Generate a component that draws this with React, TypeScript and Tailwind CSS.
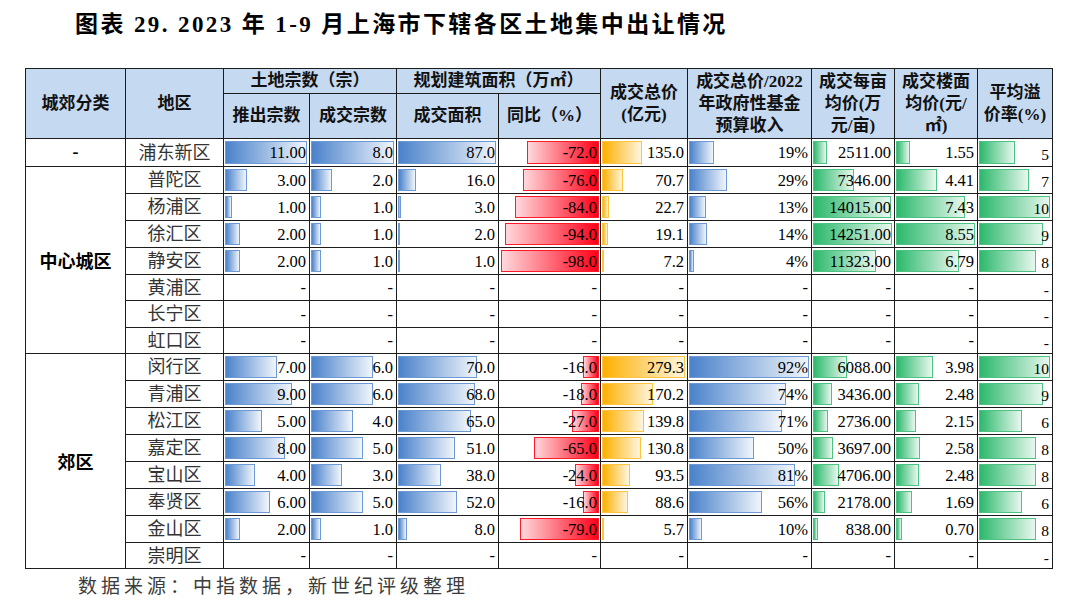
import React from "react";

type Row = {
  name: string;
  v: (number | null)[];
  h?: string;
};

const center: Row[] = [
  { name: "普陀区", v: [3, 2, 16, -76, 70.7, 29, 7346, 4.41, 7] },
  { name: "杨浦区", v: [1, 1, 3, -84, 22.7, 13, 14015, 7.43, 10] },
  { name: "徐汇区", v: [2, 1, 2, -94, 19.1, 14, 14251, 8.55, 9] },
  { name: "静安区", v: [2, 1, 1, -98, 7.2, 4, 11323, 6.79, 8] },
  { name: "黄浦区", v: [null, null, null, null, null, null, null, null, null], h: "h-[26px]" },
  { name: "长宁区", v: [null, null, null, null, null, null, null, null, null] },
  { name: "虹口区", v: [null, null, null, null, null, null, null, null, null], h: "h-[26px]" },
];

const suburb: Row[] = [
  { name: "闵行区", v: [7, 6, 70, -16, 279.3, 92, 6088, 3.98, 10] },
  { name: "青浦区", v: [9, 6, 68, -18, 170.2, 74, 3436, 2.48, 9] },
  { name: "松江区", v: [5, 4, 65, -27, 139.8, 71, 2736, 2.15, 6] },
  { name: "嘉定区", v: [8, 5, 51, -65, 130.8, 50, 3697, 2.58, 8] },
  { name: "宝山区", v: [4, 3, 38, -24, 93.5, 81, 4706, 2.48, 8] },
  { name: "奉贤区", v: [6, 5, 52, -16, 88.6, 56, 2178, 1.69, 6] },
  { name: "金山区", v: [2, 1, 8, -79, 5.7, 10, 838, 0.7, 8] },
  { name: "崇明区", v: [null, null, null, null, null, null, null, null, null], h: "h-[26px]" },
];

const pudong: Row = { name: "浦东新区", v: [11, 8, 87, -72, 135, 19, 2511, 1.55, 5], h: "h-[26px]" };

const bars = {
  blue: "left-[1px] border-[#6d9ad5] bg-[linear-gradient(to_right,#4a82cb,#f0f5fb)]",
  red: "right-[1px] border-[#ff1a2a] bg-[linear-gradient(to_left,#ff0018,#ffd8dc)]",
  orange: "left-[1px] border-[#ffc43f] bg-[linear-gradient(to_right,#ffb000,#fff5de)]",
  green: "left-[1px] border-[#4dc283] bg-[linear-gradient(to_right,#2cb96c,#e8f7ee)]",
};

// per column: colour, max for the bar, formatter
const cols: { bar: keyof typeof bars; max: number; fmt: (n: number) => string }[] = [
  { bar: "blue", max: 11, fmt: (n) => n.toFixed(2) },
  { bar: "blue", max: 8, fmt: (n) => n.toFixed(1) },
  { bar: "blue", max: 87, fmt: (n) => n.toFixed(1) },
  { bar: "red", max: 98, fmt: (n) => n.toFixed(1) },
  { bar: "orange", max: 279.3, fmt: (n) => n.toFixed(1) },
  { bar: "blue", max: 92, fmt: (n) => `${n}%` },
  { bar: "green", max: 14251, fmt: (n) => n.toFixed(2) },
  { bar: "green", max: 8.55, fmt: (n) => n.toFixed(2) },
  { bar: "green", max: 10, fmt: (n) => String(n) },
];

const cell = "border border-[#1c1c1c]";

function BarCell({ value, col }: { value: number | null; col: number }) {
  const c = cols[col];
  const last = col === 8;
  return (
    <td className={`${cell} relative p-0`}>
      {value !== null && (
        <div
          className={`absolute top-[2px] bottom-[2px] border ${bars[c.bar]}`}
          style={{ width: `calc((100% - 3px) * ${Math.abs(value) / c.max})` }}
        />
      )}
      <div
        className={`relative pr-[3px] text-right text-black leading-[19px] ${
          last ? "pt-[3px] text-[15.5px]" : "text-[16.5px]"
        }`}
      >
        {value === null ? "-" : c.fmt(value)}
      </div>
    </td>
  );
}

function DataRow({ row, first }: { row: Row; first?: React.ReactNode }) {
  return (
    <tr className={row.h ?? "h-[27px]"}>
      {first}
      <td className={`${cell} text-center text-[18px] text-[#333] leading-none`}>{row.name}</td>
      {row.v.map((v, i) => (
        <BarCell key={i} value={v} col={i} />
      ))}
    </tr>
  );
}

export default function App() {
  return (
    <div className="w-[1080px] h-[605px] bg-white font-['Liberation_Serif','Noto_Sans_CJK_SC',serif] text-black">
      <div className="pt-[9px] pl-[75px] text-[23px] leading-[32px] font-bold tracking-[2.4px]">
        图表 29. 2023 年 1-9 月上海市下辖各区土地集中出让情况
      </div>

      <table className="mt-[27px] ml-[25px] w-[1027px] table-fixed border-collapse">
        <colgroup>
          <col className="w-[100px]" />
          <col className="w-[98px]" />
          <col className="w-[86px]" />
          <col className="w-[87px]" />
          <col className="w-[102px]" />
          <col className="w-[102px]" />
          <col className="w-[87px]" />
          <col className="w-[124px]" />
          <col className="w-[83px]" />
          <col className="w-[83px]" />
          <col className="w-[75px]" />
        </colgroup>
        <thead className="bg-[#c5d9f1] text-[17px] font-bold leading-[22px] text-[#111]">
          <tr className="h-[25px]">
            <th rowSpan={2} className={cell}>城郊分类</th>
            <th rowSpan={2} className={cell}>地区</th>
            <th colSpan={2} className={cell}>土地宗数（宗）</th>
            <th colSpan={2} className={cell}>规划建筑面积（万㎡）</th>
            <th rowSpan={2} className={cell}>
              成交总价
              <br />
              (亿元)
            </th>
            <th rowSpan={2} className={`${cell} px-0`}>
              成交总价/2022
              <br />
              年政府性基金
              <br />
              预算收入
            </th>
            <th rowSpan={2} className={cell}>
              成交每亩
              <br />
              均价(万
              <br />
              元/亩)
            </th>
            <th rowSpan={2} className={cell}>
              成交楼面
              <br />
              均价(元/
              <br />
              ㎡)
            </th>
            <th rowSpan={2} className={cell}>
              平均溢
              <br />
              价率(%)
            </th>
          </tr>
          <tr className="h-[45px]">
            <th className={cell}>推出宗数</th>
            <th className={cell}>成交宗数</th>
            <th className={cell}>成交面积</th>
            <th className={cell}>同比（%）</th>
          </tr>
        </thead>
        <tbody>
          <DataRow
            row={pudong}
            first={<td className={`${cell} text-center text-[18px] font-bold`}>-</td>}
          />
          {center.map((r, i) => (
            <DataRow
              key={r.name}
              row={r}
              first={
                i === 0 ? (
                  <td
                    rowSpan={center.length}
                    className={`${cell} text-center text-[18px] font-bold font-['Noto_Sans_CJK_SC',sans-serif]`}
                  >
                    中心城区
                  </td>
                ) : undefined
              }
            />
          ))}
          {suburb.map((r, i) => (
            <DataRow
              key={r.name}
              row={r}
              first={
                i === 0 ? (
                  <td
                    rowSpan={suburb.length}
                    className={`${cell} text-center text-[18px] font-bold font-['Noto_Sans_CJK_SC',sans-serif]`}
                  >
                    郊区
                  </td>
                ) : undefined
              }
            />
          ))}
        </tbody>
      </table>

      <div className="mt-[6px] pl-[78px] text-[19px] leading-[24px] tracking-[4px] text-[#3c3c3c]">
        数据来源：中指数据，新世纪评级整理
      </div>
    </div>
  );
}
